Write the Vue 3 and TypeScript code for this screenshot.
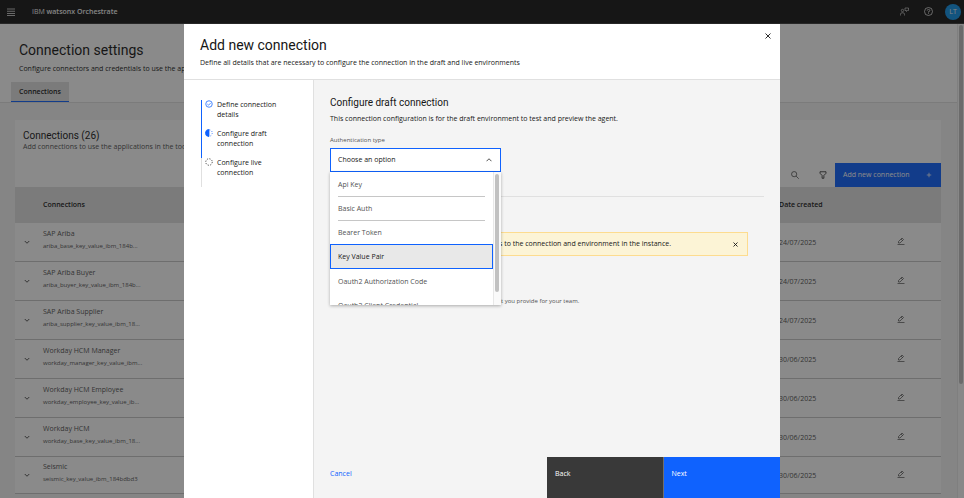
<script setup lang="ts">
import { ref } from 'vue'

interface Connection {
  name: string
  id: string
  created: string
}

const connections: Connection[] = [
  { name: 'SAP Ariba', id: 'ariba_base_key_value_ibm_184b...', created: '24/07/2025' },
  { name: 'SAP Ariba Buyer', id: 'ariba_buyer_key_value_ibm_184b...', created: '24/07/2025' },
  { name: 'SAP Ariba Supplier', id: 'ariba_supplier_key_value_ibm_18...', created: '24/07/2025' },
  { name: 'Workday HCM Manager', id: 'workday_manager_key_value_ibm...', created: '30/06/2025' },
  { name: 'Workday HCM Employee', id: 'workday_employee_key_value_ib...', created: '30/06/2025' },
  { name: 'Workday HCM', id: 'workday_base_key_value_ibm_18...', created: '30/06/2025' },
  { name: 'Seismic', id: 'seismic_key_value_ibm_184bdbd3', created: '30/06/2025' },
]

const steps = [
  { label: 'Define connection details', state: 'done' },
  { label: 'Configure draft connection', state: 'current' },
  { label: 'Configure live connection', state: 'todo' },
]

const options: string[] = [
  'Api Key',
  'Basic Auth',
  'Bearer Token',
  'Key Value Pair',
  'Oauth2 Authorization Code',
  'Oauth2 Client Credential',
]

const open = ref(true)
const selected = ref('')
const active = ref('Key Value Pair')

function choose(option: string): void {
  selected.value = option
  open.value = false
}
</script>

<template>
  <div class="app">
    <header class="topbar">
      <button class="icon-button" type="button" aria-label="Menu">
        <svg class="icon-8" viewBox="0 0 16 16"><path d="M0 2h16M0 6.500h16M0 11h16M0 15h16" stroke="currentColor" stroke-width="1.500" /></svg>
      </button>
      <span class="brand">IBM <b>watsonx Orchestrate</b></span>
      <button class="icon-button push" type="button" aria-label="Community">
        <svg class="icon-9" viewBox="0 0 18 18" fill="none" stroke="currentColor" stroke-width="1.2">
          <circle cx="5" cy="7" r="2.4" /><path d="M1 17v-2.5a3 3 0 0 1 3-3h2a3 3 0 0 1 3 3V17M10 2h7v5h-2l-2 2V7h-3z" />
        </svg>
      </button>
      <button class="icon-button" type="button" aria-label="Help">
        <svg class="icon-9" viewBox="0 0 18 18" fill="none" stroke="currentColor" stroke-width="1.5">
          <circle cx="9" cy="9" r="8" /><path d="M6.5 7.2V7A2 2 0 0 1 8.5 5h1a2 2 0 0 1 0 4.2H9v2M9 12.5v1.6" />
        </svg>
      </button>
      <button class="avatar" type="button">LT</button>
    </header>

    <div class="body">
      <main class="page">
        <div class="page-head">
          <h1>Connection settings</h1>
          <p>Configure connectors and credentials to use the applications</p>
          <nav><a href="#connections" class="tab">Connections</a></nav>
        </div>

        <section id="connections" class="card">
          <h2>Connections (26)</h2>
          <p>Add connections to use the applications in the tools</p>
          <div class="toolbar">
            <button class="icon-button" type="button" aria-label="Search">
              <svg class="icon-8" viewBox="0 0 16 16" fill="none" stroke="currentColor" stroke-width="1.2">
                <circle cx="6.3" cy="6.3" r="5.2" /><path d="M10.2 10.2 15.5 15.5" />
              </svg>
            </button>
            <button class="icon-button" type="button" aria-label="Filter">
              <svg class="icon-8" viewBox="0 0 16 16" fill="none" stroke="currentColor" stroke-width="1.5">
                <path d="M2 1.5h12v3L9.8 9v5.5H6.2V9L2 4.500z" />
              </svg>
            </button>
            <button class="add" type="button">
              Add new connection
              <svg class="icon-6" viewBox="0 0 12 12"><path d="M6 1.500v9M1.500 6h9" stroke="currentColor" stroke-width="1.500" /></svg>
            </button>
          </div>
          <table>
            <colgroup><col class="c-toggle" /><col /><col class="c-date" /><col class="c-edit" /></colgroup>
            <thead>
              <tr><th></th><th>Connections</th><th>Date created</th><th></th></tr>
            </thead>
            <tbody>
              <tr v-for="row in connections" :key="row.name">
                <td class="toggle">
                  <button type="button" :aria-label="'Expand ' + row.name">
                    <svg class="icon-6" viewBox="0 0 12 12"><path d="M1.500 4 6 8.500 10.500 4" fill="none" stroke="currentColor" stroke-width="1.5" /></svg>
                  </button>
                </td>
                <td class="title"><span class="name">{{ row.name }}</span><span class="id">{{ row.id }}</span></td>
                <td class="date">{{ row.created }}</td>
                <td>
                  <button type="button" :aria-label="'Edit ' + row.name">
                    <svg class="icon-8" viewBox="0 0 16 16" fill="none" stroke="currentColor" stroke-width="1.1">
                      <path d="M1 15h14M3 12V9L10 2l3 3L6 12zM8 4l3 3" />
                    </svg>
                  </button>
                </td>
              </tr>
            </tbody>
          </table>
        </section>
      </main>
      <div class="page-scroll"><span class="page-thumb"></span></div>
    </div>

    <div class="overlay">
      <section class="modal" role="dialog" aria-modal="true" aria-labelledby="modal-title">
        <header class="modal-head">
          <div>
            <h2 id="modal-title">Add new connection</h2>
            <p>Define all details that are necessary to configure the connection in the draft and live environments</p>
          </div>
          <button class="icon-button" type="button" aria-label="Close">
            <svg class="icon-6" viewBox="0 0 6 6"><path d="M.5.5l5 5M5.500.500l-5 5" stroke="currentColor" stroke-width="0.900" /></svg>
          </button>
        </header>

        <div class="modal-body">
          <ol class="steps">
            <li v-for="step in steps" :key="step.label" :class="step.state">
              <svg class="icon-8" viewBox="0 0 16 16" fill="none" stroke="currentColor" stroke-width="1.5">
                <template v-if="step.state === 'done'">
                  <circle cx="8" cy="8" r="6.500" /><path d="M4.800 8.200 7 10.400l4.200-4.200" />
                </template>
                <template v-else-if="step.state === 'current'">
                  <circle cx="8" cy="8" r="6.500" stroke-dasharray="2 3.100" /><path d="M8 1a7 7 0 0 0 0 14z" fill="currentColor" />
                </template>
                <circle v-else cx="8" cy="8" r="6.500" stroke-dasharray="2.400 2.700" />
              </svg>
              <span>{{ step.label }}</span>
            </li>
          </ol>

          <form class="config" @submit.prevent>
            <div class="fields">
              <h3>Configure draft connection</h3>
              <p>This connection configuration is for the draft environment to test and preview the agent.</p>
              <label for="auth-type">Authentication type</label>
              <div class="dropdown">
                <select id="auth-type" v-model="selected" :class="{ open }" @mousedown.prevent="open = !open">
                  <option value="">Choose an option</option>
                  <option v-for="option in options" :key="option">{{ option }}</option>
                </select>
                <svg class="icon-6 caret" viewBox="0 0 12 12"><path d="M1 8.500 6 3.500 11 8.500" fill="none" stroke="currentColor" stroke-width="1.500" /></svg>
                <div v-if="open" class="menu">
                  <ul role="listbox" aria-label="Authentication type">
                    <li
                      v-for="option in options"
                      :key="option"
                      role="option"
                      :aria-selected="option === active"
                      :class="{ active: option === active }"
                      @mouseenter="active = option"
                      @click="choose(option)"
                    >
                      <span>{{ option }}</span>
                    </li>
                  </ul>
                  <div class="menu-scroll"><span class="menu-thumb"></span></div>
                </div>
              </div>
              <hr />
              <div class="notice" role="status">
                <span>s to the connection and environment in the instance.</span>
                <button class="icon-button" type="button" aria-label="Dismiss">
                  <svg class="icon-5" viewBox="0 0 5 5"><path d="M.5.5l4 4M4.500.500l-4 4" stroke="currentColor" stroke-width="0.900" /></svg>
                </button>
              </div>
              <p class="helper">t you provide for your team.</p>
            </div>
            <footer>
              <button class="cancel" type="button">Cancel</button>
              <button class="back" type="button">Back</button>
              <button class="next" type="submit">Next</button>
            </footer>
          </form>
        </div>
      </section>
    </div>
  </div>
</template>

<style>
body {
  margin: 0;
}
</style>

<style scoped>
* {
  box-sizing: border-box;
}
.app {
  position: relative;
  display: flex;
  flex-direction: column;
  height: 100vh;
  overflow: hidden;
  color: #161616;
  font: 7px/10px 'Open Sans', 'Noto Sans', sans-serif;
}
h1, h2, h3, p, ol, ul {
  margin: 0;
  padding: 0;
  list-style: none;
}
h1, h2, h3 {
  font-family: Roboto, sans-serif;
  font-weight: 400;
}
button {
  padding: 0;
  border: 0;
  background: none;
  color: inherit;
  font: inherit;
  text-align: left;
  cursor: pointer;
}
svg {
  display: block;
  flex: none;
}
.icon-5 { width: 5px; height: 5px; }
.icon-6 { width: 6px; height: 6px; }
.icon-8 { width: 8px; height: 8px; }
.icon-9 { width: 9px; height: 9px; }

.topbar {
  display: flex;
  flex: none;
  align-items: center;
  height: 24px;
  padding: 0 3px 0 7px;
  border-bottom: 1px solid #393939;
  background: #161616;
  color: #f4f4f4;
}
.brand {
  margin-left: 17px;
}
.brand b {
  font-weight: 600;
}
.push {
  margin-left: auto;
}
.push + .icon-button {
  margin: 0 12px 0 15px;
}
.avatar {
  width: 16px;
  height: 16px;
  border-radius: 50%;
  background: #1192e8;
  text-align: center;
}

.body {
  display: flex;
  flex: 1;
  min-height: 0;
}
.page {
  flex: 1;
  overflow: hidden;
  background: #f4f4f4;
}
.page-head {
  padding: 17px 19px 0;
  border-bottom: 1px solid #e0e0e0;
  background: #fff;
}
h1 {
  font-size: 14px;
  line-height: 18px;
}
.page-head p {
  margin-top: 5px;
}
.page-head nav {
  display: flex;
  margin: 8px 0 0 -8px;
}
.tab {
  padding: 5px 8px 4px;
  border-bottom: 1px solid #0f62fe;
  background: #e0e0e0;
  color: inherit;
  font-weight: 600;
  text-decoration: none;
}
.card {
  margin: 17px 16px 0 15px;
  background: #fff;
}
.card h2 {
  padding: 9px 8px 0;
  font-size: 10px;
  line-height: 13px;
}
.card > p {
  padding: 0 8px;
  color: #525252;
}
.toolbar {
  display: flex;
  align-items: center;
  justify-content: flex-end;
  gap: 20px;
  margin-top: 11px;
}
.add {
  display: flex;
  align-items: center;
  justify-content: space-between;
  width: 106px;
  height: 24px;
  margin-left: -12px;
  padding: 0 9px 0 8px;
  background: #0f62fe;
  color: #fff;
}
table {
  width: 100%;
  border-spacing: 0;
  table-layout: fixed;
}
.c-toggle { width: 28px; }
.c-date { width: 118px; }
.c-edit { width: 44px; }
th {
  height: 36px;
  padding: 0;
  background: #e0e0e0;
  font-weight: 600;
  text-align: left;
}
td {
  height: 39px;
  padding: 0;
  border-bottom: 1px solid #c6c6c6;
  color: #525252;
}
tr:last-child td {
  height: 37px;
}
td svg {
  color: #161616;
}
td.toggle {
  padding: 1px 0 0 9px;
}
td.title {
  padding-bottom: 4px;
}
td.date {
  padding-top: 1px;
}
.name, .id {
  display: block;
}
.id {
  margin-top: 2px;
  font-size: 6px;
}
.page-scroll {
  flex: none;
  width: 7px;
  padding: 1px;
  border-left: 1px solid #e8e8e8;
  background: #fafafa;
}
.page-thumb {
  display: block;
  width: 4px;
  height: 76%;
  border-radius: 2px;
  background: #c1c1c1;
}

.overlay {
  position: absolute;
  inset: 0;
  display: flex;
  justify-content: center;
  padding: 24px 184px 0;
  background: rgba(22, 22, 22, 0.5);
}
.modal {
  display: flex;
  flex: 1;
  flex-direction: column;
  min-width: 0;
  background: #fff;
}
.modal-head {
  display: flex;
  flex: none;
  align-items: flex-start;
  justify-content: space-between;
  padding: 12px 9px 11px 16px;
  border-bottom: 1px solid #e0e0e0;
}
.modal-head h2 {
  margin-bottom: 4px;
  font-size: 14px;
  line-height: 18px;
}
.modal-head .icon-button {
  margin-top: -3px;
}
.modal-body {
  display: flex;
  flex: 1;
  min-height: 0;
}
.steps {
  flex: none;
  width: 129px;
  padding: 20px 17px 0;
}
.steps li {
  display: flex;
  gap: 4px;
  height: 29px;
  padding-left: 3px;
  border-left: 1px solid #0f62fe;
}
.steps li span {
  width: 66px;
}
.steps svg {
  color: #0f62fe;
}
.steps .todo {
  border-color: #e0e0e0;
}
.steps .todo svg {
  color: #161616;
}
.config {
  display: flex;
  flex: 1;
  flex-direction: column;
  justify-content: space-between;
  min-width: 0;
  border-left: 1px solid #e0e0e0;
  background: #f4f4f4;
}
.fields {
  padding: 16px 16px 0;
}
h3 {
  font-size: 10px;
  line-height: 14px;
}
h3 + p {
  margin-top: 4px;
}
label {
  display: block;
  margin: 11px 0 3px;
  color: #525252;
  font-size: 6px;
}
.dropdown {
  position: relative;
  width: 171px;
}
select {
  display: block;
  width: 100%;
  height: 24px;
  padding: 0 7px;
  border: 1px solid #8d8d8d;
  border-radius: 0;
  outline: 0;
  appearance: none;
  background: #fff;
  color: #161616;
  font: inherit;
}
select.open {
  border-color: #0f62fe;
}
.caret {
  position: absolute;
  top: 9px;
  right: 9px;
  pointer-events: none;
}
.menu {
  position: absolute;
  top: 100%;
  right: 0;
  left: 0;
  display: flex;
  height: 133px;
  overflow: hidden;
  background: #fff;
  box-shadow: 0 1px 3px rgba(0, 0, 0, 0.3);
}
.menu ul {
  flex: 1;
}
.menu li {
  height: 24px;
  padding: 0 8px;
  border: 1px solid transparent;
  border-width: 0 0 1px;
  color: #525252;
  cursor: pointer;
}
.menu li span {
  display: block;
  height: 25px;
  padding-top: 8px;
  border-bottom: 1px solid #c6c6c6;
}
.menu li:nth-child(n + 3) span {
  border-color: transparent;
}
.menu li.active {
  height: 25px;
  padding: 0 7px;
  border: 1px solid #0f62fe;
  background: #e8e8e8;
  color: #161616;
}
.menu li.active span {
  height: 23px;
  padding-top: 7px;
  border: 0;
}
.menu-scroll {
  width: 8px;
  padding: 2px 2px 0 1px;
  border-left: 1px solid #e8e8e8;
  background: #fafafa;
}
.menu-thumb {
  display: block;
  width: 4px;
  height: 118px;
  border-radius: 2px;
  background: #c1c1c1;
}
hr {
  height: 1px;
  margin: 24px 0 0;
  border: 0;
  background: #e0e0e0;
}
.notice {
  display: flex;
  align-items: center;
  justify-content: space-between;
  height: 24px;
  margin: 35px 16px 0 0;
  padding: 0 9px 0 168px;
  border: 1px solid #fddc8f;
  background: #fcf4d6;
}
.helper {
  margin-top: 40px;
  padding-left: 171px;
  color: #525252;
  font-size: 6px;
}
footer {
  display: grid;
  grid-template-columns: 2fr 1fr 1fr;
  height: 41px;
}
footer button {
  display: flex;
  align-items: flex-start;
  padding: 12px 8px;
  color: #fff;
}
footer .cancel {
  padding-left: 16px;
  color: #0f62fe;
}
footer .back {
  border-right: 1px solid #6f6f6f;
  background: #393939;
}
footer .next {
  background: #0f62fe;
}
</style>
